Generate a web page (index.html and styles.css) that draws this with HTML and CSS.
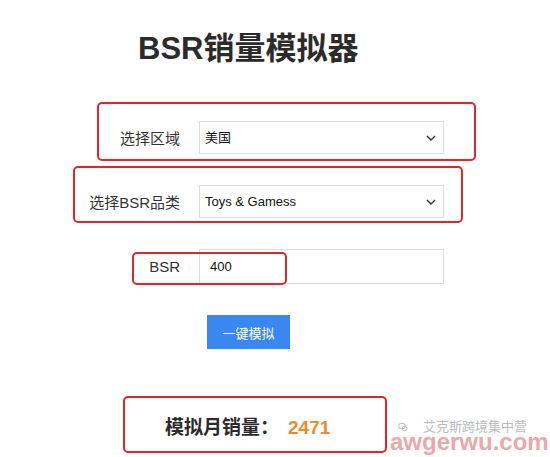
FILE: index.html
```html
<!DOCTYPE html>
<html lang="zh-CN">
<head>
  <meta charset="UTF-8" />
  <meta name="viewport" content="width=device-width, initial-scale=1.0"/>
  <title>BSR销量模拟器</title>
  <link rel="stylesheet" href="styles.css">
</head>
<body>
  <div class="page">
    <h1 class="title">BSR销量模拟器</h1>

    <div class="form">
      <label for="region">选择区域</label>
      <div class="select-wrap">
        <select id="region">
          <option value="us">美国</option>
        </select>
        <svg class="chevron" width="10" height="6" viewBox="0 0 10 6"><path d="M1 1l4 4 4-4" fill="none" stroke="#333" stroke-width="1.4"/></svg>
      </div>

      <label for="category">选择BSR品类</label>
      <div class="select-wrap">
        <select id="category">
          <option value="toys">Toys &amp; Gamess</option>
        </select>
        <svg class="chevron" width="10" height="6" viewBox="0 0 10 6"><path d="M1 1l4 4 4-4" fill="none" stroke="#333" stroke-width="1.4"/></svg>
      </div>

      <label for="bsr">BSR</label>
      <input type="text" id="bsr" value="400"/>
    </div>

    <div class="actions">
      <button class="simulate">一键模拟</button>
    </div>

    <p class="result">模拟月销量：<span class="count">2471</span></p>

    <!-- annotation boxes -->
    <div class="mark mark-region"></div>
    <div class="mark mark-category"></div>
    <div class="mark mark-bsr"></div>
    <div class="mark mark-result"></div>

    <div class="watermark">
      <div class="wm-name">
        <svg width="10" height="10" viewBox="0 0 10 10"><ellipse cx="4" cy="4" rx="3.4" ry="2.8" fill="none" stroke="#bbb" stroke-width="1"/><ellipse cx="6.5" cy="6.5" rx="2.6" ry="2.1" fill="none" stroke="#bbb" stroke-width="1"/></svg>
        <span>艾克斯跨境集中营</span>
      </div>
      <div class="wm-site">awgerwu.com</div>
    </div>
  </div>
</body>
</html>
```

FILE: styles.css
```css
body {
  margin: 0;
  background: #fff;
  font-family: "Liberation Sans", "Noto Sans CJK SC", sans-serif;
  color: #333;
}
.page {
  position: relative;
  width: 550px;
  height: 457px;
  overflow: hidden;
}
.title {
  margin: 0;
  padding: 29px 0 0 138px;
  font-size: 31px;
  line-height: 40px;
  font-weight: bold;
  color: #2b2b2b;
}
.form {
  display: grid;
  grid-template-columns: 180px 245px;
  column-gap: 19px;
  row-gap: 31px;
  margin-top: 52px;
  align-items: center;
}
.form label {
  text-align: right;
  font-size: 15px;
  color: #333;
}
.select-wrap {
  position: relative;
}
select, input {
  display: block;
  width: 245px;
  height: 33px;
  box-sizing: border-box;
  border: 1px solid #dedede;
  border-radius: 0;
  background: #fff;
  padding: 0 5px;
  font-family: "Liberation Sans", "Noto Sans CJK SC", sans-serif;
  font-size: 13px;
  color: #111;
  -webkit-appearance: none;
  appearance: none;
  outline: none;
}
input {
  height: 35px;
  padding-left: 10px;
}
.chevron {
  position: absolute;
  right: 8px;
  top: 14px;
}
.actions {
  padding: 31px 0 0 207px;
}
.simulate {
  display: block;
  width: 83px;
  height: 34px;
  border: none;
  background: #3a87f2;
  color: #fff;
  font-family: "Liberation Sans", "Noto Sans CJK SC", sans-serif;
  font-size: 13px;
  cursor: pointer;
}
.result {
  margin: 66px 0 0 165px;
  font-size: 19px;
  line-height: 26px;
  font-weight: bold;
  color: #2b2b2b;
}
.count {
  margin-left: 9px;
  color: #ee8a2c;
}
.mark {
  position: absolute;
  border: 2.5px solid #e0262b;
  border-radius: 5px;
  box-sizing: border-box;
}
.mark-region { left: 97px; top: 102px; width: 379px; height: 59px; }
.mark-category { left: 73px; top: 166px; width: 390px; height: 57px; }
.mark-bsr { left: 132px; top: 252px; width: 155px; height: 33px; }
.mark-result { left: 123px; top: 396px; width: 264px; height: 57px; }
.watermark {
  position: absolute;
  left: 390px;
  top: 421px;
}
.wm-name {
  display: flex;
  align-items: center;
  gap: 15px;
  padding-left: 8px;
  font-size: 13px;
  line-height: 12px;
  color: #bbb;
}
.wm-site {
  font-size: 24px;
  line-height: 18px;
  font-weight: bold;
  color: rgba(222, 90, 90, 0.55);
}
```
